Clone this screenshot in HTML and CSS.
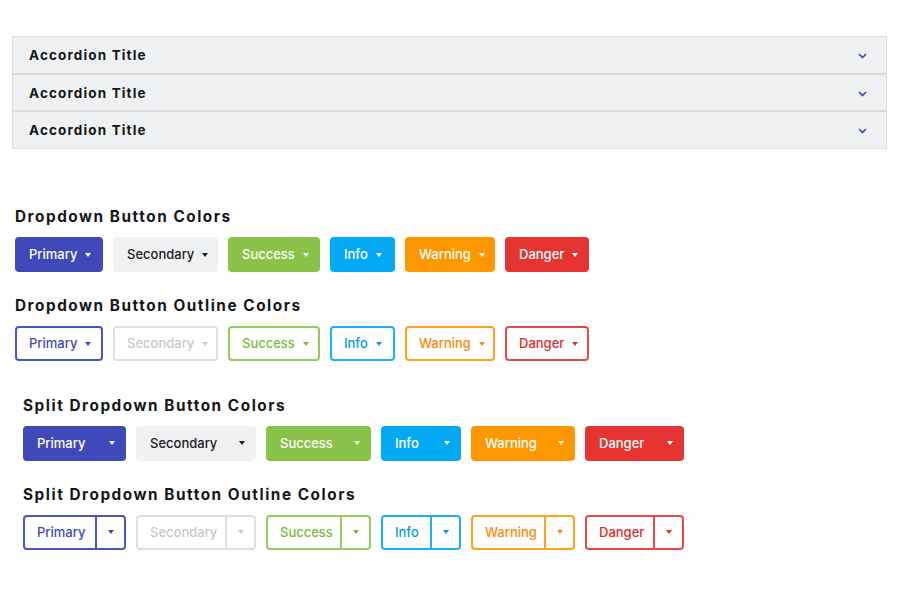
FILE: index.html
```html
<!DOCTYPE html>
<html>
<head>
<meta charset="utf-8">
<link rel="stylesheet" href="styles.css">
</head>
<body>
<div class="page">
  <div class="accordion">
    <div class="acc-row"><span class="acc-title">Accordion Title</span><svg class="chev" width="9" height="6" viewBox="0 0 9 6"><polyline points="1,1 4.5,4.5 8,1" fill="none" stroke="#3f49b9" stroke-width="1.7"/></svg></div>
    <div class="acc-row"><span class="acc-title">Accordion Title</span><svg class="chev" width="9" height="6" viewBox="0 0 9 6"><polyline points="1,1 4.5,4.5 8,1" fill="none" stroke="#3f49b9" stroke-width="1.7"/></svg></div>
    <div class="acc-row"><span class="acc-title">Accordion Title</span><svg class="chev" width="9" height="6" viewBox="0 0 9 6"><polyline points="1,1 4.5,4.5 8,1" fill="none" stroke="#3f49b9" stroke-width="1.7"/></svg></div>
  </div>

  <section class="sec sec-dd">
    <h2 class="heading">Dropdown Button Colors</h2>
    <div class="row">
      <button class="btn dd primary w-primary">Primary<span class="caret"></span></button>
      <button class="btn dd secondary w-secondary">Secondary<span class="caret"></span></button>
      <button class="btn dd success w-success">Success<span class="caret"></span></button>
      <button class="btn dd info w-info">Info<span class="caret"></span></button>
      <button class="btn dd warning w-warning">Warning<span class="caret"></span></button>
      <button class="btn dd danger w-danger">Danger<span class="caret"></span></button>
    </div>
    <h2 class="heading">Dropdown Button Outline Colors</h2>
    <div class="row">
      <button class="btn dd o-primary w-primary">Primary<span class="caret"></span></button>
      <button class="btn dd o-secondary w-secondary">Secondary<span class="caret"></span></button>
      <button class="btn dd o-success w-success">Success<span class="caret"></span></button>
      <button class="btn dd o-info w-info">Info<span class="caret"></span></button>
      <button class="btn dd o-warning w-warning">Warning<span class="caret"></span></button>
      <button class="btn dd o-danger w-danger">Danger<span class="caret"></span></button>
    </div>
  </section>

  <section class="sec sec-split">
    <h2 class="heading">Split Dropdown Button Colors</h2>
    <div class="row">
      <div class="split primary"><button class="btn main m-primary">Primary</button><button class="btn toggle"><span class="caret"></span></button></div>
      <div class="split secondary"><button class="btn main m-secondary">Secondary</button><button class="btn toggle"><span class="caret"></span></button></div>
      <div class="split success"><button class="btn main m-success">Success</button><button class="btn toggle"><span class="caret"></span></button></div>
      <div class="split info"><button class="btn main m-info">Info</button><button class="btn toggle"><span class="caret"></span></button></div>
      <div class="split warning"><button class="btn main m-warning">Warning</button><button class="btn toggle"><span class="caret"></span></button></div>
      <div class="split danger"><button class="btn main m-danger">Danger</button><button class="btn toggle"><span class="caret"></span></button></div>
    </div>
    <h2 class="heading">Split Dropdown Button Outline Colors</h2>
    <div class="row">
      <div class="split outline o-primary"><button class="btn main m-primary">Primary</button><button class="btn toggle"><span class="caret"></span></button></div>
      <div class="split outline o-secondary"><button class="btn main m-secondary">Secondary</button><button class="btn toggle"><span class="caret"></span></button></div>
      <div class="split outline o-success"><button class="btn main m-success">Success</button><button class="btn toggle"><span class="caret"></span></button></div>
      <div class="split outline o-info"><button class="btn main m-info">Info</button><button class="btn toggle"><span class="caret"></span></button></div>
      <div class="split outline o-warning"><button class="btn main m-warning">Warning</button><button class="btn toggle"><span class="caret"></span></button></div>
      <div class="split outline o-danger"><button class="btn main m-danger">Danger</button><button class="btn toggle"><span class="caret"></span></button></div>
    </div>
  </section>
</div>
</body>
</html>
```

FILE: styles.css
```css
* { box-sizing: border-box; }
html, body { margin: 0; padding: 0; background: #fff; }
body {
  font-family: "Inter", "Roboto", "Liberation Sans", sans-serif;
  color: #1c1c1e;
  width: 900px;
  height: 600px;
  overflow: hidden;
}
.page { padding-top: 36px; }

.accordion {
  margin: 0 13px 0 12px;
  border: 1px solid #dcdde0;
  background: #f0f1f3;
}
.acc-row {
  height: 37.3px;
  display: flex;
  align-items: center;
  justify-content: space-between;
  padding: 0 19px 0 16px;
  border-top: 2px solid #dcdde0;
}
.acc-row:first-child { border-top: 0; height: 36px; }
.acc-title {
  font-size: 13.5px;
  font-weight: 700;
  letter-spacing: 1.15px;
  color: #151517;
}
.chev { display: block; margin-top: 2px; }

.sec { display: flex; flex-direction: column; }
.sec-dd { padding-left: 15px; margin-top: 57px; }
.sec-split { padding-left: 23px; margin-top: 11px; }
.heading {
  margin: 0 0 10px 0;
  font-size: 15.3px;
  line-height: 21px;
  font-weight: 700;
  letter-spacing: 1.55px;
  color: #151517;
}
.row {
  display: flex;
  gap: 10px;
  height: 35px;
  margin-bottom: 23px;
}

.btn {
  font-family: inherit;
  font-size: 13px;
  font-weight: 500;
  height: 35px;
  border: 0;
  border-radius: 4px;
  padding: 0 0 0 14px;
  display: flex;
  align-items: center;
  cursor: pointer;
  background: transparent;
  color: inherit;
  white-space: nowrap;
}
.caret {
  display: inline-block;
  width: 0; height: 0;
  border-left: 3.5px solid transparent;
  border-right: 3.5px solid transparent;
  border-top: 4px solid currentColor;
}
.dd .caret { margin-left: 8px; margin-top: 1px; }

.w-primary { width: 88px; }
.w-secondary { width: 105px; }
.w-success { width: 92px; }
.w-info { width: 65px; }
.w-warning { width: 90px; }
.w-danger { width: 84px; }

.primary { background: #3f49b9; color: #fff; }
.secondary { background: #f0f1f3; color: #1c1c1e; }
.success { background: #8bc34a; color: #fff; }
.info { background: #03a9f4; color: #fff; }
.warning { background: #ff9800; color: #fff; }
.danger { background: #e53431; color: #fff; }

.o-primary { border: 2px solid #4b55c0; color: #3f49b9; background: #fff; }
.o-secondary { border: 2px solid #dedfe1; color: #c9cacc; background: #fff; }
.o-success { border: 2px solid #96ca5a; color: #7cb83c; background: #fff; }
.o-info { border: 2px solid #1cb2f5; color: #039be5; background: #fff; }
.o-warning { border: 2px solid #ffa21c; color: #fb8c00; background: #fff; }
.o-danger { border: 2px solid #e84a47; color: #e12d2a; background: #fff; }
.dd.o-primary, .dd.o-secondary, .dd.o-success, .dd.o-info, .dd.o-warning, .dd.o-danger { padding-left: 12px; }

.split {
  display: flex;
  border-radius: 4px;
  height: 35px;
}
.split .btn { color: inherit; }
.split .main { border-radius: 4px 0 0 4px; }
.split .toggle {
  width: 29px;
  padding: 0;
  justify-content: center;
  border-radius: 0 4px 4px 0;
}
.m-primary { width: 74px; }
.m-secondary { width: 91px; }
.m-success { width: 76px; }
.m-info { width: 51px; }
.m-warning { width: 75px; }
.m-danger { width: 70px; }

.split.outline { border: 0; background: transparent; }
.split.outline .btn { border: 2px solid; border-color: inherit; background: #fff; padding-left: 12px; }
.split.outline .toggle { margin-left: -2px; padding-left: 0; width: 31px; }
.split.outline.o-primary { border-color: #4b55c0; }
.split.outline.o-secondary { border-color: #dedfe1; }
.split.outline.o-success { border-color: #96ca5a; }
.split.outline.o-info { border-color: #1cb2f5; }
.split.outline.o-warning { border-color: #ffa21c; }
.split.outline.o-danger { border-color: #e84a47; }
.split.outline { border-width: 0; }
```
